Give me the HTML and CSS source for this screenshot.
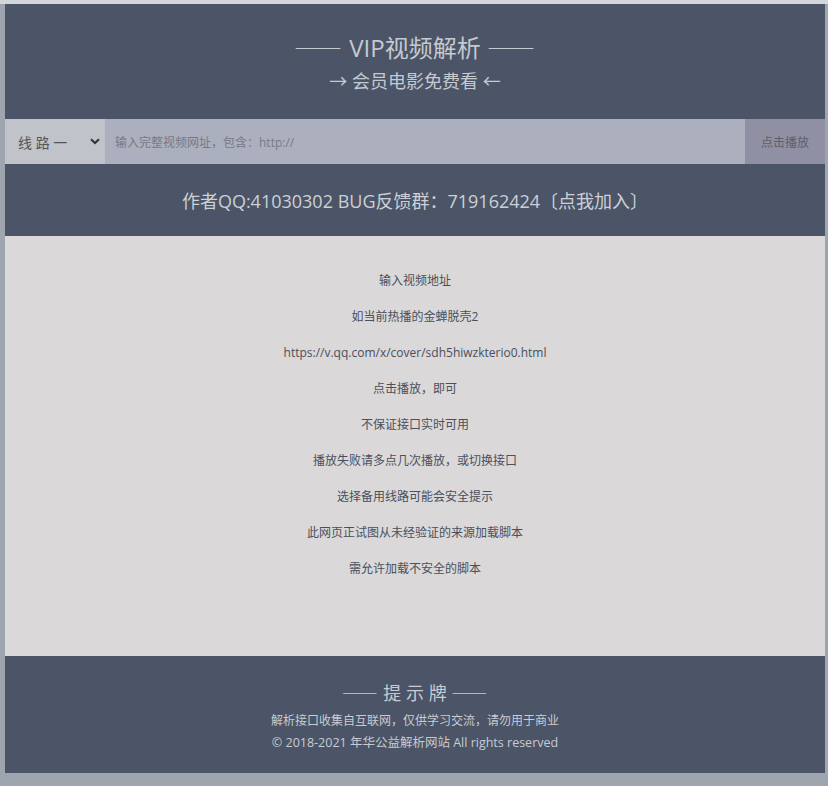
FILE: index.html
```html
<!DOCTYPE html>
<html lang="zh-CN">
<head>
<meta charset="utf-8">
<title>VIP视频解析</title>
<link rel="stylesheet" href="styles.css">
</head>
<body>
<div class="wrap">
  <header class="head">
    <h1 class="title"><span class="dash">——</span> VIP视频解析 <span class="dash">——</span></h1>
    <p class="sub">→ 会员电影免费看 ←</p>
  </header>
  <div class="bar">
    <div class="select">
      <span>线 路 一</span>
      <svg class="chev" width="10" height="7" viewBox="0 0 10 7"><path d="M1 1.2 L5 5 L9 1.2" fill="none" stroke="#333" stroke-width="2"/></svg>
    </div>
    <div class="input">输入完整视频网址，包含：http://</div>
    <div class="btn">点击播放</div>
  </div>
  <div class="qq">作者QQ:41030302 BUG反馈群：719162424〔点我加入〕</div>
  <main class="content">
    <p>输入视频地址</p>
    <p>如当前热播的金蝉脱壳2</p>
    <p>https://v.qq.com/x/cover/sdh5hiwzkterio0.html</p>
    <p>点击播放，即可</p>
    <p>不保证接口实时可用</p>
    <p>播放失败请多点几次播放，或切换接口</p>
    <p>选择备用线路可能会安全提示</p>
    <p>此网页正试图从未经验证的来源加载脚本</p>
    <p>需允许加载不安全的脚本</p>
  </main>
  <footer class="foot">
    <h2 class="foot-title"><span class="dash">——</span> 提 示 牌 <span class="dash">——</span></h2>
    <p class="foot-line">解析接口收集自互联网，仅供学习交流，请勿用于商业</p>
    <p class="foot-copy">© 2018-2021 年华公益解析网站 All rights reserved</p>
  </footer>
</div>
</body>
</html>
```
FILE: styles.css
```css
html, body {
  margin: 0;
  padding: 0;
}
body {
  background: #9fa5ae;
  border-top: 4px solid #d3d6da;
  font-family: "Open Sans", "Noto Sans CJK SC", sans-serif;
  height: 782px;
  overflow: hidden;
}
.wrap {
  width: 820px;
  margin-left: 5px;
}
.dash {
  font-family: "Noto Sans CJK SC", sans-serif;
  letter-spacing: 1px;
}
.head {
  background: #4b5567;
  height: 115px;
  display: flex;
  flex-direction: column;
  align-items: center;
  color: #c5c9d0;
}
.title {
  margin: 28px 0 0;
  font-size: 24px;
  font-weight: normal;
  line-height: 30px;
}
.sub {
  margin: 6px 0 0;
  font-size: 18px;
  line-height: 24px;
}
.bar {
  display: flex;
  height: 45px;
  font-size: 12px;
}
.select {
  width: 100px;
  background: #c0c3c9;
  display: flex;
  align-items: center;
  justify-content: space-between;
  padding: 0 4px 0 13px;
  box-sizing: border-box;
  font-size: 14px;
  color: #555;
}
.chev {
  margin-right: 1px;
}
.input {
  flex: 1;
  background: #acafbd;
  display: flex;
  align-items: center;
  padding-left: 10px;
  color: #777a85;
}
.btn {
  width: 80px;
  background: #8f90a3;
  display: flex;
  align-items: center;
  justify-content: center;
  color: #5d5f6b;
}
.qq {
  background: #4b5567;
  height: 72px;
  display: flex;
  align-items: center;
  justify-content: center;
  font-size: 18px;
  color: #cdd0d6;
}
.content {
  background: #dad8d9;
  height: 420px;
  padding-top: 27px;
  box-sizing: border-box;
  text-align: center;
  font-size: 12px;
  color: #4a4f5c;
}
.content p {
  margin: 0;
  line-height: 36px;
}
.foot {
  background: #4b5567;
  height: 117px;
  display: flex;
  flex-direction: column;
  align-items: center;
  color: #c8cbd2;
}
.foot-title {
  margin: 24px 0 0;
  font-size: 18px;
  font-weight: normal;
  line-height: 24px;
}
.foot-line {
  margin: 6px 0 0;
  font-size: 12px;
  line-height: 20px;
}
.foot-copy {
  margin: 2px 0 0;
  font-size: 12.5px;
  line-height: 20px;
}
```
